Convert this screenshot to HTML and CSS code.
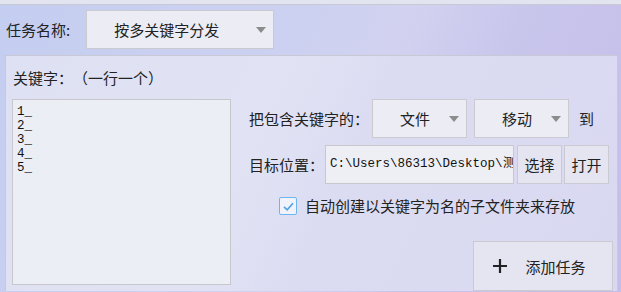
FILE: index.html
```html
<!DOCTYPE html>
<html lang="zh-CN">
<head>
    <meta charset="UTF-8">
    <title>关键字分发</title>
    <link rel="stylesheet" href="styles.css">
</head>
<body>

<div class="top-strip"></div>

<div class="task-row">
    <span class="label">任务名称:</span>
    <div class="combo combo-task">
        <span class="combo-text">按多关键字分发</span>
        <span class="combo-arrow"></span>
    </div>
</div>

<div class="panel">
    <div class="panel-title">关键字：（一行一个）</div>
    <div class="panel-body">
        <div class="keywords">1_<br>2_<br>3_<br>4_<br>5_</div>

        <div class="options">
            <div class="opt-row">
                <span class="label label-wide">把包含关键字的：</span>
                <div class="combo combo-small">
                    <span class="combo-text">文件</span>
                    <span class="combo-arrow"></span>
                </div>
                <div class="combo combo-small">
                    <span class="combo-text">移动</span>
                    <span class="combo-arrow"></span>
                </div>
                <span class="label to">到</span>
            </div>

            <div class="opt-row row-target">
                <span class="label label-target">目标位置：</span>
                <div class="path-box"><span class="path-text">C:\Users\86313\Desktop\测</span></div>
                <button class="btn btn-small">选择</button>
                <button class="btn btn-small">打开</button>
            </div>

            <div class="check-row">
                <span class="checkbox">
                    <svg width="13" height="13" viewBox="0 0 13 13"><path d="M2 6.8 L5.2 9.8 L11 3.2" fill="none" stroke="#4ea3e6" stroke-width="1.6"/></svg>
                </span>
                <span class="label">自动创建以关键字为名的子文件夹来存放</span>
            </div>

            <div class="add-row">
                <button class="btn btn-add">
                    <svg width="16" height="16" viewBox="0 0 16 16"><path d="M8 1 V15 M1 8 H15" stroke="#222" stroke-width="2.2"/></svg>
                    <span>添加任务</span>
                </button>
            </div>
        </div>
    </div>
</div>

</body>
</html>
```

FILE: styles.css
```css
/* page */
body {
    margin: 0;
    width: 621px;
    height: 292px;
    overflow: hidden;
    font-family: "Noto Sans CJK SC", "Noto Sans", sans-serif;
    font-size: 15px;
    color: #222;
    text-spacing-trim: space-all;
    background: linear-gradient(115deg, #c4cef0 0%, #ccd1f1 40%, #d2d2f0 55%, #c9c6ec 70%, #c3bde9 100%);
}

.top-strip {
    height: 4px;
    background-color: #e2e4f0;
    border-bottom: 1px solid #c9c9d4;
}

.label {
    white-space: nowrap;
    line-height: 20px;
}

/* task name row */
.task-row {
    display: flex;
    align-items: center;
    margin-top: 5px;
    padding-left: 6px;
}

.combo {
    display: flex;
    align-items: center;
    box-sizing: border-box;
    height: 39px;
    background-color: #ebecf4;
    border: 1px solid #cacad0;
}

.combo-text {
    flex: 1;
    text-align: center;
}

.combo-arrow {
    width: 0;
    height: 0;
    margin-right: 7px;
    border-left: 5px solid transparent;
    border-right: 5px solid transparent;
    border-top: 6px solid #8c8c8c;
}

.combo-task {
    width: 188px;
    margin-left: 16px;
}

.combo-task .combo-arrow {
    margin-left: 10px;
}

/* main panel */
.panel {
    margin: 6px 3px 0 5px;
    height: 224px;
    padding: 11px 3px 0 6px;
    background: linear-gradient(115deg, #dee1f3 0%, #e1e3f4 40%, #dbdcf2 55%, #d9d8f1 100%);
    border: 1px solid #c9c9d6;
    border-bottom: none;
}

.panel-title {
    height: 22px;
    line-height: 22px;
    padding-left: 1px;
}

.panel-body {
    display: flex;
    margin-top: 10px;
}

.keywords {
    box-sizing: border-box;
    width: 219px;
    height: 186px;
    padding: 5px 4px;
    background-color: #eceef5;
    border: 1px solid #c8c8cc;
    font-family: "Liberation Mono", monospace;
    font-size: 12.5px;
    line-height: 14px;
    color: #111;
}

/* right side */
.options {
    display: flex;
    flex-direction: column;
    width: 364px;
    margin-left: 18px;
}

.opt-row {
    display: flex;
    align-items: center;
    height: 39px;
}

.label-wide {
    width: 123px;
}

.combo-small {
    width: 95px;
    margin-right: 7px;
}

.combo-small .combo-text {
    padding-left: 8px;
}

.to {
    margin-left: 3px;
}

.row-target {
    margin-top: 7px;
    height: 39px;
}

.label-target {
    width: 76px;
}

.path-box {
    box-sizing: border-box;
    width: 189px;
    height: 39px;
    line-height: 37px;
    padding-left: 4px;
    overflow: hidden;
    white-space: nowrap;
    background-color: #eeeff5;
    border: 1px solid #c8c8cc;
    font-family: "Liberation Mono", monospace;
    font-size: 12.5px;
    color: #111;
}

.btn {
    box-sizing: border-box;
    font-family: inherit;
    font-size: 15px;
    color: #222;
    background-color: #e4e5f1;
    border: 1px solid #cacad2;
    padding: 0;
}

.btn-small {
    width: 45px;
    height: 39px;
    margin-left: 2px;
}

.row-target .path-box + .btn-small {
    margin-left: 3px;
}

.check-row {
    display: flex;
    align-items: center;
    margin-top: 12px;
    padding-left: 30px;
    gap: 8px;
}

.checkbox {
    display: flex;
    align-items: center;
    justify-content: center;
    box-sizing: border-box;
    width: 18px;
    height: 18px;
    background-color: #f0f3fb;
    border: 1.5px solid #6cb6f0;
    border-radius: 2px;
}

.add-row {
    display: flex;
    justify-content: flex-end;
    margin-top: 25px;
}

.btn-add {
    display: flex;
    align-items: center;
    justify-content: center;
    gap: 17px;
    width: 140px;
    height: 50px;
    padding-right: 8px;
}
```
